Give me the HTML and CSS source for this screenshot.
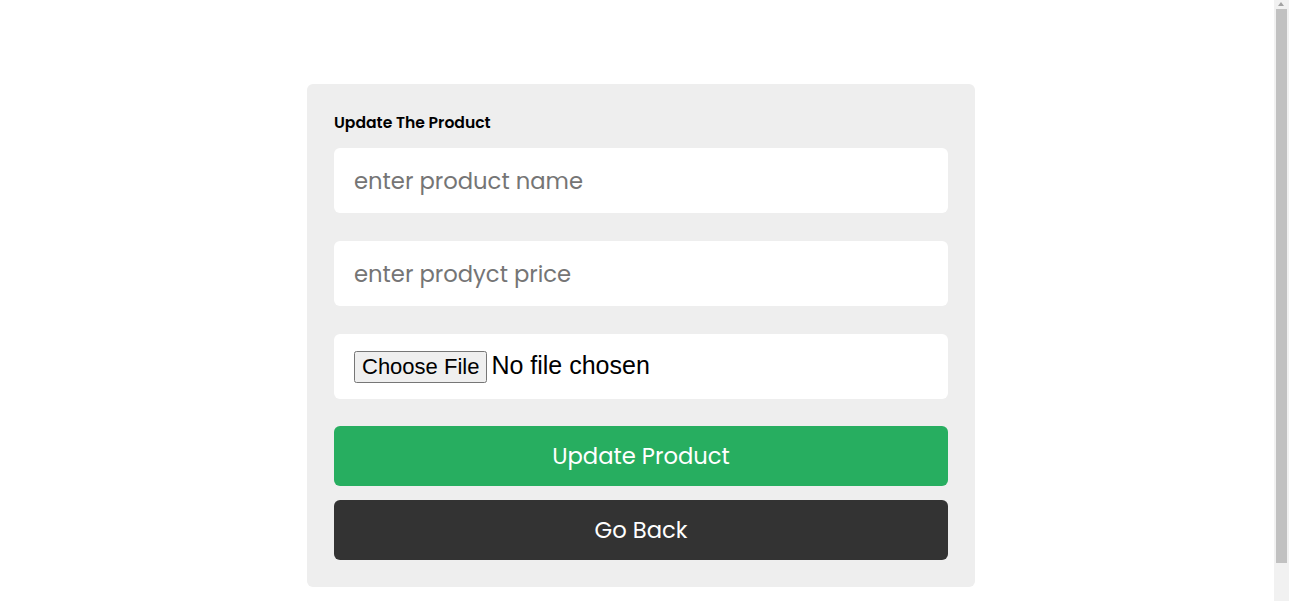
FILE: index.html
```html
<!DOCTYPE html>
<html lang="en">
<head>
<meta charset="utf-8">
<title>Update Product</title>
<link rel="stylesheet" href="styles.css">
</head>
<body>
<div class="page">
  <form class="card">
    <h3 class="title">Update The Product</h3>
    <input class="field" type="text" placeholder="enter product name">
    <input class="field" type="text" placeholder="enter prodyct price">
    <div class="field file-field"><input class="file" type="file"></div>
    <button type="button" class="btn btn-green">Update Product</button>
    <button type="button" class="btn btn-dark">Go Back</button>
  </form>
</div>
<div class="scrollbar" aria-hidden="true">
  <div class="scroll-arrow"></div>
  <div class="scroll-thumb"></div>
</div>
</body>
</html>
```

FILE: styles.css
```css
* { box-sizing: border-box; }
html, body { margin: 0; padding: 0; background: #fff; }
body { font-family: Poppins, "Open Sans", "Noto Sans", sans-serif; }
.page { padding: 84px 11px 60px 0; }
.card {
  width: 668px;
  margin: 0 auto;
  background: #eeeeee;
  border-radius: 6px;
  padding: 27px;
  display: flex;
  flex-direction: column;
}
.title {
  margin: 0 0 13px;
  font-size: 15.6px;
  line-height: 24px;
  font-weight: 600;
  color: #000;
}
.field {
  height: 65px;
  border: none;
  border-radius: 6px;
  background: #fff;
  padding: 0 20px;
  font-family: inherit;
  font-size: 22.7px;
  color: #333;
  margin-bottom: 28px;
  outline: none;
}
.field::placeholder { color: #757575; }
.file-field { display: flex; align-items: center; margin-bottom: 27px; }
.file {
  font-family: "Liberation Sans", Arial, sans-serif;
  font-size: 25px;
  color: #000;
}
.file::file-selector-button {
  font-family: "Liberation Sans", Arial, sans-serif;
  font-size: 22px;
  margin-right: 4px;
}
.btn {
  height: 60px;
  border: none;
  border-radius: 6px;
  font-family: inherit;
  font-size: 22.7px;
  color: #fff;
  cursor: pointer;
}
.btn-green { background: #27ae60; margin-bottom: 14px; }
.btn-dark { background: #333333; }

.scrollbar {
  position: fixed;
  top: 0;
  bottom: 0;
  right: 4px;
  width: 15px;
  background: #f1f1f1;
}
.scroll-arrow {
  position: absolute;
  top: 2px;
  left: 4px;
  width: 0;
  height: 0;
  border-left: 3.5px solid transparent;
  border-right: 3.5px solid transparent;
  border-bottom: 4px solid #a3a3a3;
}
.scroll-thumb {
  position: absolute;
  top: 9px;
  left: 2px;
  right: 2px;
  height: 554px;
  background: #c1c1c1;
}
```
